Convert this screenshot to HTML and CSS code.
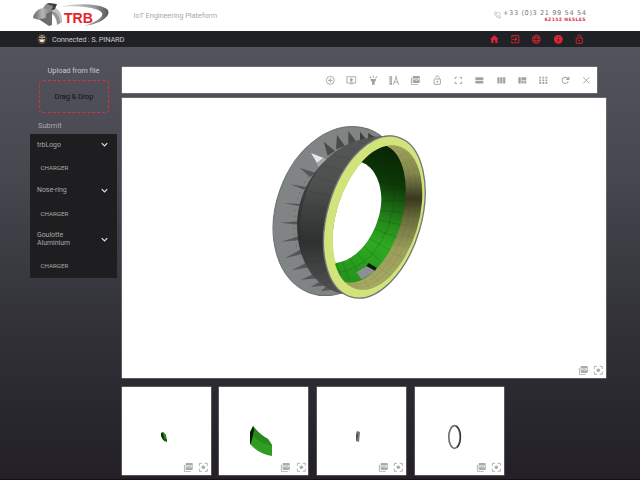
FILE: index.html
```
<!DOCTYPE html>
<html lang="en">
<head>
<meta charset="utf-8">
<title>TRB IoT Engineering Plateform</title>
<link rel="stylesheet" href="styles.css">
</head>
<body>
<svg class="defs" width="0" height="0">
  <symbol id="home" viewBox="0 0 24 24"><path d="M10 20v-6h4v6h5v-8h3L12 3 2 12h3v8z"/></symbol>
  <symbol id="exit" viewBox="0 0 24 24"><path d="M10.09 15.59L11.5 17l5-5-5-5-1.41 1.41L12.67 11H3v2h9.67zM19 3H5c-1.1 0-2 .9-2 2v4h2V5h14v14H5v-4H3v4c0 1.1.9 2 2 2h14c1.1 0 2-.9 2-2V5c0-1.1-.9-2-2-2z"/></symbol>
  <symbol id="globe" viewBox="0 0 24 24"><g fill="none" stroke="currentColor" stroke-width="2"><circle cx="12" cy="12" r="9"/><ellipse cx="12" cy="12" rx="4" ry="9"/><path d="M4 9h16M4 15h16"/></g></symbol>
  <symbol id="info" viewBox="0 0 24 24"><path fill-rule="evenodd" d="M12 2a10 10 0 1 0 0 20 10 10 0 0 0 0-20zm1 15h-2v-6h2zm0-8h-2V7h2z"/></symbol>
  <symbol id="lock" viewBox="0 0 24 24"><g fill="none" stroke="currentColor" stroke-width="2"><rect x="5" y="9" width="14" height="12" rx="1"/><path d="M8 6a4 4 0 0 1 8 0v3"/></g><circle cx="12" cy="15" r="2"/></symbol>
  <symbol id="plus" viewBox="0 0 24 24"><path fill="none" stroke="currentColor" stroke-width="2" d="M12 3a9 9 0 1 0 0 18 9 9 0 0 0 0-18zM12 7v10M7 12h10"/></symbol>
  <symbol id="screen" viewBox="0 0 24 24"><path fill="none" stroke="currentColor" stroke-width="2" d="M2 4h20v14H2zM8 20h8"/><path d="M12 7l5 5h-3v3h-4v-3H7z"/></symbol>
  <symbol id="torch" viewBox="0 0 24 24"><path d="M6 9h12v3l-3 4v6H9v-6l-3-4zM11 1h2v5h-2zM3 4l2-1 3 4-2 1zM19 3l2 1-3 4-2-1z"/></symbol>
  <symbol id="measure" viewBox="0 0 24 24"><path d="M1 2h6v20H1zm2 2v2h2V4zm0 4v2h2V8zm0 4v2h2v-2zm0 4v2h2v-2z" fill-rule="evenodd"/><path fill="none" stroke="currentColor" stroke-width="2" d="M10 22l6-17 6 17M12 16h8M16 1v4"/></symbol>
  <symbol id="pdf" viewBox="0 0 24 24"><path fill-rule="evenodd" d="M20 2H8c-1.1 0-2 .9-2 2v12c0 1.1.9 2 2 2h12c1.1 0 2-.9 2-2V4c0-1.1-.9-2-2-2zM8 7v6h1v-2h1.5c.8 0 1.500-.7 1.500-1.500v-1c0-.8-.7-1.500-1.500-1.500zm1 1h2v2H9zm4-1v6h2.500c.8 0 1.500-.7 1.500-1.500v-3c0-.8-.7-1.500-1.500-1.500zm1 1h2v4h-2zm4-1v6h1v-2h2v-1h-2V8h2V7z"/><path d="M4 6H2v14c0 1.100.9 2 2 2h14v-2H4z"/></symbol>
  <symbol id="full" viewBox="0 0 24 24"><path fill="none" stroke="currentColor" stroke-width="2.200" d="M5 9V5h4M15 5h4v4M19 15v4h-4M9 19H5v-4"/></symbol>
  <symbol id="rows" viewBox="0 0 24 24"><path d="M3 5h18v6H3zM3 13h18v6H3z"/></symbol>
  <symbol id="cols" viewBox="0 0 24 24"><path d="M3 5h5v14H3zM9.500 5h5v14h-5zM16 5h5v14h-5z"/></symbol>
  <symbol id="quilt" viewBox="0 0 24 24"><path d="M3 5h5.500v14H3zM10 5h11v6H10zM10 12.500h5V19h-5zM16.500 12.500H21V19h-4.500z"/></symbol>
  <symbol id="grid" viewBox="0 0 24 24"><path d="M3 4h4v4H3zm7 0h4v4h-4zm7 0h4v4h-4zM3 10h4v4H3zm7 0h4v4h-4zm7 0h4v4h-4zM3 16h4v4H3zm7 0h4v4h-4zm7 0h4v4h-4z"/></symbol>
  <symbol id="reload" viewBox="0 0 24 24"><path d="M17.650 6.350A8 8 0 1 0 19.730 14h-2.080A6 6 0 1 1 12 6c1.660 0 3.140.69 4.220 1.780L13 11h8V3z"/></symbol>
  <symbol id="close" viewBox="0 0 24 24"><path fill="none" stroke="currentColor" stroke-width="2" d="M5 5l14 14M19 5L5 19"/></symbol>
  <symbol id="focus" viewBox="0 0 24 24"><path fill="none" stroke="currentColor" stroke-width="2" d="M3 9V3h6M15 3h6v6M21 15v6h-6M9 21H3v-6"/><circle cx="12" cy="12" r="4"/></symbol>
  <symbol id="chevron" viewBox="0 0 24 24"><path fill="none" stroke="currentColor" stroke-width="2.500" d="M6 9l6 6 6-6"/></symbol>
</svg>

<header class="brand">
  <svg class="logo" viewBox="0 0 80 26">
    <defs>
      <linearGradient id="swoosh" x1="0" x2="1"><stop offset="0" stop-color="#ddd"/><stop offset=".7" stop-color="#999"/><stop offset="1" stop-color="#555"/></linearGradient>
      <linearGradient id="arch" x1="0" x2="1"><stop offset="0" stop-color="#666"/><stop offset=".5" stop-color="#b5b5b5"/><stop offset="1" stop-color="#777"/></linearGradient>
    </defs>
    <path fill="url(#swoosh)" d="M28 4C42 0 67 0 75 6c5 5-3 13-17 16l-6 1c12-4 20-9 18-13C67 4 43 2 28 4z"/>
    <path fill="url(#arch)" d="M1 15C2 9 7 5 12 5l8 3-6 5v4H7l-6-2z"/>
    <path fill="#6c6c6c" d="M8 16l6-1V11l6-3v14l-3 1-9-6z"/>
    <path fill="#969696" d="M20 8c6 1 9 5 10 11l-5 3c0-5-2-9-5-11z"/>
    <path fill="#c2c2c2" d="M19 4c7 1 11 5 11 13l-2 3c0-6-3-11-9-13z"/>
    <path fill="#8d8d8d" d="M11 5l3-4 8 1-3 6z"/>
    <path fill="#3e3e3e" d="M14 1l3-1 8 1-2 5-4 2 2-5z"/>
    <text class="logo-text" x="32" y="19.500" textLength="29" lengthAdjust="spacingAndGlyphs">TRB</text>
  </svg>
  <div class="tagline">IoT Engineering Plateform</div>
  <div class="contact">
    <svg class="phone" viewBox="0 0 10 10"><path d="M1 1.500l2-1 1.200 2.500-1 1C4 5.500 5 6.300 6.300 6.800l1-1L9.500 7 9 9C5 10 0 5 1 1.500zM5.500 1C8 1 9 2.500 9 4.500"/></svg>
    <div><div class="tel">+33 (0)3 21 99 54 54</div><div class="city">62152 NESLES</div></div>
  </div>
</header>

<nav class="bar">
  <svg class="avatar" viewBox="0 0 10 10"><circle cx="5" cy="5" r="5" fill="#393b35"/><path fill="#bda58a" d="M2 3q3-4 6 0v3q-3 5-6 0z"/><path fill="#71643f" d="M2 3q3-3 6 0z"/><path fill="#322d29" d="M2 4h2.500v1H2zM5.500 4H8v1H5.500z"/><path fill="#ede9df" d="M2.500 6h5L6 8H4z"/><path fill="#a33a31" d="M1.500 7l3 2h1l3-2-1 2.500h-5z"/></svg>
  <div class="user">Connected : S. PINARD</div>
  <div class="nav-icons">
    <svg><use href="#home"/></svg><svg><use href="#exit"/></svg><svg><use href="#globe"/></svg><svg><use href="#info"/></svg><svg><use href="#lock"/></svg>
  </div>
</nav>

<main class="layout">
  <aside class="side">
    <div class="upload">Upload from file</div>
    <div class="drop"><span>Drag &amp; Drop</span></div>
    <div class="submit">Submit</div>
    <div class="panel">
      <section class="item"><div class="item-head"><span>trbLogo</span><svg><use href="#chevron"/></svg></div><div class="load">CHARGER</div></section>
      <section class="item"><div class="item-head"><span>Nose-ring</span><svg><use href="#chevron"/></svg></div><div class="load">CHARGER</div></section>
      <section class="item tall"><div class="item-head"><span>Goulotte<br>Aluminium</span><svg><use href="#chevron"/></svg></div><div class="load">CHARGER</div></section>
    </div>
  </aside>

  <div class="content">
    <div class="toolbar">
      <svg><use href="#plus"/></svg><svg><use href="#screen"/></svg><svg><use href="#torch"/></svg><svg><use href="#measure"/></svg><svg><use href="#pdf"/></svg><svg><use href="#lock"/></svg><svg><use href="#full"/></svg><svg><use href="#rows"/></svg><svg><use href="#cols"/></svg><svg><use href="#quilt"/></svg><svg><use href="#grid"/></svg><svg><use href="#reload"/></svg><svg><use href="#close"/></svg>
    </div>

    <div class="viewer">
      <svg class="model" viewBox="0 0 510 570">
        <defs>
          <linearGradient id="drum" x1="0" y1="0" x2="0" y2="1"><stop offset="0" stop-color="#555857"/><stop offset=".3" stop-color="#4e4f4f"/><stop offset=".65" stop-color="#2f3030"/><stop offset="1" stop-color="#565656"/></linearGradient>
          <linearGradient id="green" x1="0" y1="0" x2="0" y2="1"><stop offset="0" stop-color="#082404"/><stop offset=".25" stop-color="#0d3908"/><stop offset=".5" stop-color="#23861a"/><stop offset=".68" stop-color="#2faa22"/><stop offset="1" stop-color="#24921a"/></linearGradient>
          <linearGradient id="bore" x1="0" y1="0" x2="0" y2="1"><stop offset="0" stop-color="#a5a85f"/><stop offset=".2" stop-color="#85884e"/><stop offset=".37" stop-color="#38391f"/><stop offset=".5" stop-color="#6a6c3c"/><stop offset=".7" stop-color="#9a9e5a"/><stop offset="1" stop-color="#a8ac65"/></linearGradient>
          <clipPath id="mouth"><ellipse cx="337" cy="308" rx="123.500" ry="224" transform="rotate(16.900 337 308)"/></clipPath>
          <clipPath id="inner-ring"><ellipse cx="297" cy="295" rx="115" ry="214" transform="rotate(16 297 295)"/></clipPath>
        </defs>
        <ellipse cx="222" cy="288" rx="188" ry="261" transform="rotate(19.600 222 288)" fill="#808484" stroke="#6b6e6e" stroke-width="3"/>
        <g fill="#555858">
          <path d="M285 50l20 25-20 8zM310 53l24 18-25 8zM318 60l20 10-18 5z" fill="#3e4040"/>
          <path d="M250 48l25 33-25 9zM216 60l24 33-27 10zM176 80l34 28-22 14z" fill="#494b4b"/>
          <path d="M138 114l38 15-20 15z" fill="#e8e8e8"/><path d="M156 143l20-15 8 5-25 23z" fill="#a5a8a8"/>
          <path d="M104 158l48 16-17 12zM76 208l50 8-9 8zM56 265l54 2-8 6zM46 323l54-4v10zM48 380l55-17 3 12zM60 430l50-29 6 15zM80 466l50-26 12 15zM107 494l46-20 13 16zM137 516l34-20 18 15zM168 528l18-16 16 12z"/>
        </g>
        <path d="M140 170Q95 230 88 300T110 440" fill="none" stroke="#4b4d4d" stroke-width="3" stroke-dasharray="3 15"/>
        <path fill="url(#drum)" d="M385 62C300 62 235 80 180 138C122 195 93 270 97 345C100 430 140 510 224 535L285 548L400 300z"/>
        <path fill="#2b2d2d" opacity=".5" d="M180 138C122 195 93 270 97 345C100 385 105 405 112 425C103 370 103 310 116 260Q132 190 180 138z"/>
        <g fill="none" stroke="#232424" stroke-opacity=".22" stroke-width="2">
          <path d="M307 72l45 5M280 82l46 8M240 97l60 12M205 120l65 17M174 150l70 20M150 186l70 20M129 228l73 15M113 273l75 12M108 318l70 10M107 363l68 4M112 405l67-2M123 443l67-8M144 477l62-15M173 505l52-13"/>
        </g>
        <ellipse cx="328" cy="306" rx="141" ry="250" transform="rotate(16.350 328 306)" fill="#d1e47c" stroke="#747678" stroke-width="4"/>
        <g clip-path="url(#mouth)">
          <path fill="url(#bore)" d="M180 80h320v460H180z"/>
          <g fill="none" stroke="#444522" stroke-opacity=".16" stroke-width="1.500">
            <ellipse cx="310" cy="299" rx="118" ry="217" transform="rotate(16 310 299)"/>
            <ellipse cx="323" cy="303" rx="121" ry="220" transform="rotate(16.500 323 303)"/>
            <path d="M390 130l50-24M402 150l52-19M411 173l55-16M418 198l54-12M421 224h52M422 247h51M421 271l51 4M416 300l54 7M410 329l55 10M402 357l55 15M389 386l55 17M376 411l52 23M360 434l48 27M340 457l45 31M319 476l36 37M295 491l24 35M266 501l18 28"/>
          </g>
          <ellipse cx="297" cy="295" rx="115" ry="214" transform="rotate(16 297 295)" fill="url(#green)"/>
          <g clip-path="url(#inner-ring)" fill="none" stroke="#092d06" stroke-opacity=".4" stroke-width="1.500">
            <path d="M325 120Q385 150 389 235Q388 335 320 420Q275 465 210 475"/>
            <path d="M307 134l25-25M322 151l40-23M335 174l55-22M344 200l68-20M348 228l74-9M349 258l73-1M346 286l70 8M339 314l67 15M329 342l64 24M314 371l60 34M297 394l49 44M276 415l40 43M253 429l30 46M232 439l20 55M215 445l13 40"/>
          </g>
          <path fill="#fff" d="M290 142C325 154 349 200 349 255C347 335 290 434 213 444L190 420V200z"/>
          <path fill="#8c9094" d="M274 472l32-19 27 14-43 26z"/><path fill="#061f04" d="M304 453l7-9 24 14-5 9z"/>
        </g>
        <path fill="#d1e47c" d="M291 141C240 200 204 290 203 370Q203 410 213 446L201 446Q188 390 192 340Q205 220 260 150z"/>
      </svg>
      <div class="view-tools"><svg><use href="#pdf"/></svg><svg><use href="#focus"/></svg></div>
    </div>

    <div class="thumbs">
      <div class="thumb">
        <svg class="shape" viewBox="0 0 90 89"><path fill="#092b06" d="M40 46l2-1 3 3v6l-3-1-2-4z"/><path fill="#248e1b" d="M41 45l4 3 1 7-3-5z"/><path fill="#176010" d="M42 50l4 2v3l-3-1z"/></svg>
        <div class="view-tools"><svg><use href="#pdf"/></svg><svg><use href="#focus"/></svg></div>
      </div>
      <div class="thumb">
        <svg class="shape" viewBox="0 0 90 89"><path fill="#309c23" d="M35 39Q42 48 50 52l4 6v11Q41 67 32 57z"/><path fill="#278a1c" d="M35 39Q42 48 50 52l4 6Q43 58 34 48z"/><path fill="#071d04" d="M35 39l-3 6v13l2-5 2-10z"/></svg>
        <div class="view-tools"><svg><use href="#pdf"/></svg><svg><use href="#focus"/></svg></div>
      </div>
      <div class="thumb">
        <svg class="shape" viewBox="0 0 90 89"><path fill="#77776f" d="M41 44l3 1-1 10-3-1z"/><path fill="#4e514c" d="M41 44l-1 4v6l2-5z"/></svg>
        <div class="view-tools"><svg><use href="#pdf"/></svg><svg><use href="#focus"/></svg></div>
      </div>
      <div class="thumb">
        <svg class="shape" viewBox="0 0 90 89"><ellipse cx="40.500" cy="50" rx="5.700" ry="11.300" fill="none" stroke="#717676" stroke-width="1.700"/><path fill="none" stroke="#353838" stroke-width="1.300" d="M42 39Q47 42 46.500 51Q46 58 43 60.500"/></svg>
        <div class="view-tools"><svg><use href="#pdf"/></svg><svg><use href="#focus"/></svg></div>
      </div>
    </div>
  </div>
</main>
</body>
</html>
```
FILE: styles.css
```
* { box-sizing: border-box; }
body {
  margin: 0;
  width: 640px;
  height: 480px;
  overflow: hidden;
  display: flex;
  flex-direction: column;
  font-family: Roboto, "Liberation Sans", sans-serif;
  font-size: 7.5px;
  color: #b5b6b9;
}
svg { display: block; fill: currentColor; flex: none; }
.defs { position: absolute; }

.brand { height: 31px; background: #fff; display: flex; align-items: flex-start; padding: 3px 54px 0 32px; }
.logo { width: 80px; height: 26px; }
.logo-text { font: bold 14.500px "Liberation Sans", sans-serif; fill: #e5222c; }
.tagline { margin: 8px 0 0 21.500px; color: #aaa; font-size: 7.500px; line-height: 10px; letter-spacing: -.12px; white-space: nowrap; }
.contact { margin-left: auto; display: flex; gap: 2px; padding-top: 7px; }
.phone { width: 7px; height: 8px; margin-top: 1px; fill: none; stroke: #aaa; stroke-width: 1; }
.tel { font: 6.600px/7px "DejaVu Sans", sans-serif; color: #777; width: 83px; letter-spacing: .6px; white-space: nowrap; }
.city { font: bold 4.600px/5px "DejaVu Sans", sans-serif; color: #d93a4b; text-align: right; letter-spacing: .35px; }

.bar { height: 16px; background: #202124; display: flex; align-items: center; padding: 0 55.500px 0 37px; }
.avatar { width: 10px; height: 10px; }
.user { margin-left: 5px; color: #c5c6c8; font-size: 7.500px; letter-spacing: -.2px; }
.nav-icons { margin-left: auto; display: flex; gap: 10.660px; color: #dc2638; }
.nav-icons svg { width: 10.660px; height: 10.660px; }

.layout { height: 433px; display: flex; padding-left: 30px; background: linear-gradient(#52535c, #46474f 30%, #313137 65%, #232127 98%); border-bottom: 1px solid #1c0e18; }
.side { width: 87px; margin-right: 4.500px; padding-top: 19px; display: flex; flex-direction: column; }
.upload { text-align: center; line-height: 10px; color: #c6c7ca; letter-spacing: -.1px; }
.drop { margin: 4px 8px 0 9px; height: 33px; display: flex; align-items: center; justify-content: center; border: 1px dashed #e02c3f; border-radius: 4px; color: #121317; font-size: 7.500px; letter-spacing: -.1px; }
.submit { margin: 7.500px 0 0 8px; height: 13px; line-height: 10px; color: #a9aaae; }
.panel { background: #1e1e20; height: 144px; color: #aaa9ab; }
.item { height: 45.700px; padding: 0 7px; }
.item-head { height: 22px; display: flex; align-items: center; justify-content: space-between; font-size: 6.900px; line-height: 8px; }
.item-head svg { width: 11px; height: 11px; color: #e3e3e3; }
.load { margin: 7.500px 0 0 3.500px; height: 10px; line-height: 10px; font-size: 6.200px; }
.tall .item-head { height: 29px; }

.content { width: 485px; padding-top: 20px; display: flex; flex-direction: column; }
.toolbar { width: 475px; height: 26px; background: #fff; display: flex; align-items: center; justify-content: flex-end; gap: 10.660px; padding-right: 5px; color: #a2a2a2; }
.toolbar svg { width: 10.660px; height: 10.660px; }
.viewer { margin-top: 5px; width: 484px; height: 280px; background: #fff; position: relative; padding: 17px 0 0 143.500px; }
.viewer, .toolbar, .thumb { box-shadow: 0 0 0 .5px #85868b; }
.model { width: 170px; height: 190px; }
.view-tools { position: absolute; right: 2px; bottom: 2px; display: flex; gap: 4.500px; color: #aaa; }
.view-tools svg { width: 10.660px; height: 10.660px; }
.thumbs { margin-top: 9px; display: flex; gap: 8.800px; }
.thumb { position: relative; width: 89px; height: 88px; background: #fff; }
.shape { width: 90px; height: 89px; margin-left: -1px; }
```
